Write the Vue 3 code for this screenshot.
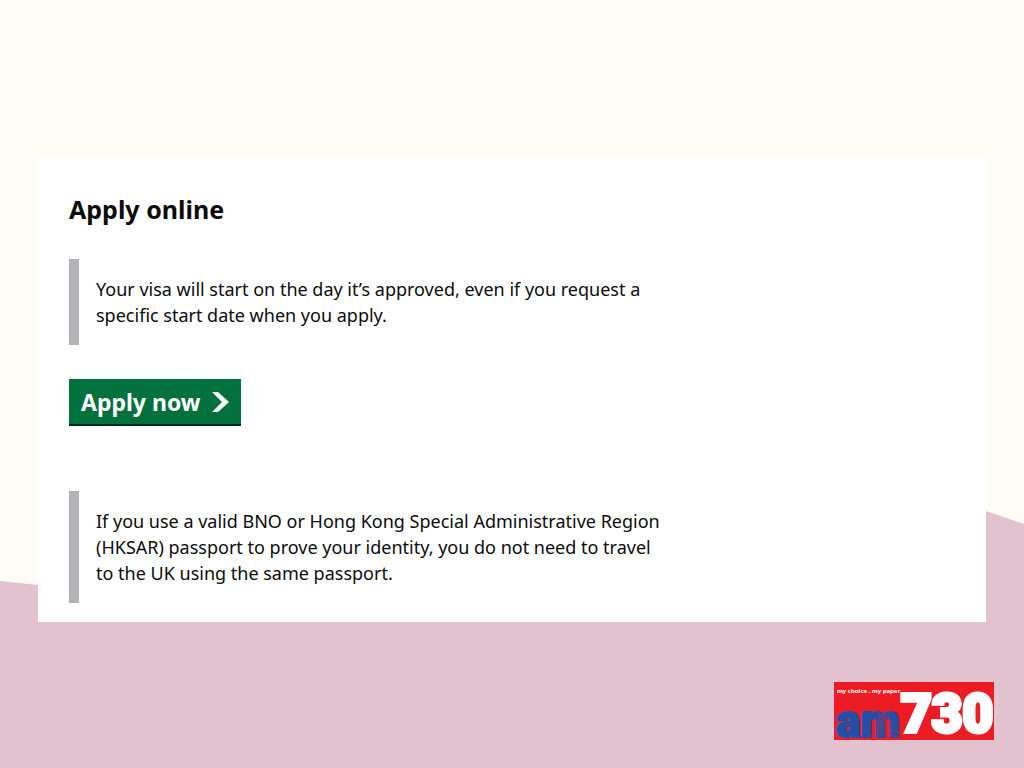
<script setup>
const notices = {
  start: "Your visa will start on the day it’s approved, even if you request a specific start date when you apply.",
  passport:
    "If you use a valid BNO or Hong Kong Special Administrative Region (HKSAR) passport to prove your identity, you do not need to travel to the UK using the same passport.",
};
</script>

<template>
  <div class="page">
    <svg class="backdrop" viewBox="0 0 1024 768" preserveAspectRatio="none" aria-hidden="true">
      <path d="M0 581 L38 585 L300 612 L684 612 L986 511 L1024 524 V768 H0 Z" fill="#e2c2cf" />
    </svg>
    <main class="card">
      <h1 class="title">Apply online</h1>
      <p class="notice">{{ notices.start }}</p>
      <a class="apply" href="#apply">
        <span>Apply now</span>
        <svg class="chevron" viewBox="0 0 17 20" aria-hidden="true">
          <path d="M0 0 H6 L17 10 L6 20 H0 L10 10 Z" fill="#fff" />
        </svg>
      </a>
      <p class="notice">{{ notices.passport }}</p>
    </main>
    <footer class="footer">
      <svg class="logo" viewBox="0 0 160 58" role="img" aria-label="am730, my choice . my paper">
        <rect width="160" height="58" fill="#ed1c24" />
        <text class="tagline" x="3" y="11">my choice . my paper</text>
        <text class="am" x="2" y="55">am</text>
        <g fill="none" stroke="#c42b4a" stroke-width="0.5">
          <path d="M31 57 Q46 51 50 25 Q54 43 67 44 M36 57 L50 29 L51 57 M43 57 L50 35 L61 57 M46 26 L43 54 M54 25 L57 56 M44 43 L66 50 M42 51 L67 55 M45 34 L60 41" />
        </g>
        <text class="number" x="67" y="50">730</text>
      </svg>
    </footer>
  </div>
</template>

<style>
body {
  margin: 0;
}
</style>

<style scoped>
.page {
  position: relative;
  isolation: isolate;
  box-sizing: border-box;
  min-height: 100vh;
  padding: 158px 30px 28px;
  display: flex;
  flex-direction: column;
  background: #fffcf6;
  font-family: "Noto Sans", "Liberation Sans", sans-serif;
  color: #0b0c0c;
}
.backdrop {
  position: absolute;
  inset: 0;
  z-index: -1;
  width: 100%;
  height: 100%;
}
.card {
  margin: 0 8px;
  padding: 33px 31px 19px;
  background: #fff;
  display: flex;
  flex-direction: column;
  align-items: flex-start;
}
.title {
  margin: 0 0 32px;
  font-size: 25px;
  line-height: 36px;
  font-weight: 700;
}
.notice {
  margin: 0;
  max-width: 568px;
  padding: 17px 0 17px 17px;
  border-left: 10px solid #b1b4b6;
  font-size: 18px;
  line-height: 26px;
}
.apply {
  display: flex;
  align-items: center;
  gap: 11px;
  margin: 34px 0 65px;
  padding: 6px 12px 5px;
  border-bottom: 2px solid #002d18;
  background: #00703c;
  color: #fff;
  font-size: 23px;
  line-height: 34px;
  font-weight: 700;
  text-decoration: none;
}
.chevron {
  width: 17px;
  height: 20px;
}
.footer {
  display: flex;
  justify-content: flex-end;
  margin-top: auto;
}
.logo {
  width: 160px;
  height: 58px;
  overflow: visible;
}
.tagline {
  fill: #fff;
  font: 700 6px "Noto Sans", sans-serif;
}
.am {
  fill: #2250a8;
  stroke: #2250a8;
  stroke-width: 2px;
  font: 900 46px Roboto, "Liberation Sans", sans-serif;
}
.number {
  fill: #fff;
  stroke: #fff;
  stroke-width: 4px;
  font: 900 53px Roboto, "Liberation Sans", sans-serif;
}
</style>
